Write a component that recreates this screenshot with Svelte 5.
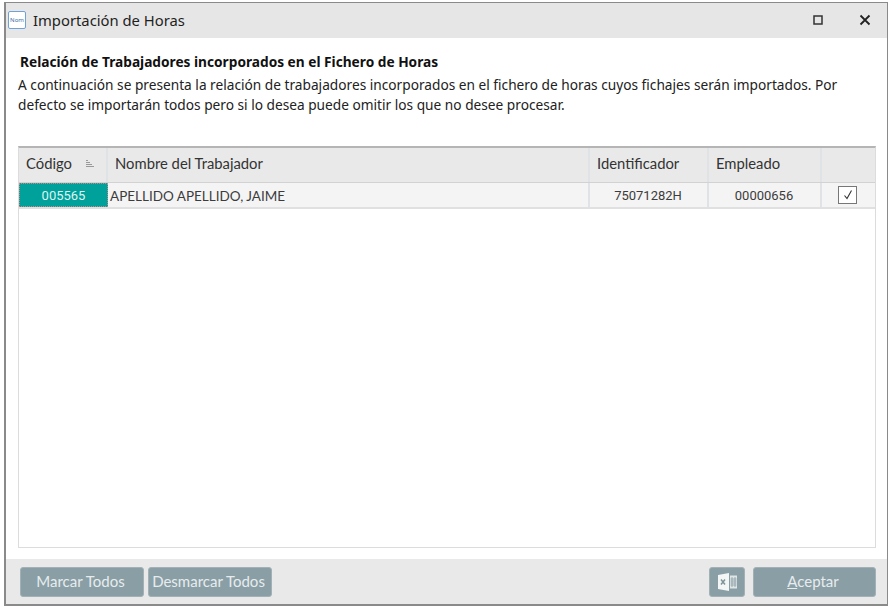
<script lang="ts">
  const columns = ["Nombre del Trabajador", "Identificador", "Empleado", ""];
  const worker = { code: "005565", name: "APELLIDO APELLIDO, JAIME", id: "75071282H", employee: "00000656" };
  let checked = $state(true);
</script>

<div class="window">
  <header class="titlebar">
    <div class="app-icon">Nom</div>
    <span class="title">Importación de Horas</span>
    <div class="controls">
      <svg width="10" height="10" viewBox="0 0 10 10"><rect x="1" y="1" width="8" height="8" fill="none" stroke="#333" stroke-width="1.5" /></svg>
      <svg width="12" height="12" viewBox="0 0 12 12"><path d="M1.5 1.5 10.5 10.5M10.5 1.5 1.5 10.5" stroke="#222" stroke-width="1.8" /></svg>
    </div>
  </header>

  <main class="content">
    <h1>Relación de Trabajadores incorporados en el Fichero de Horas</h1>
    <p>A continuación se presenta la relación de trabajadores incorporados en el fichero de horas cuyos fichajes serán importados. Por defecto se importarán todos pero si lo desea puede omitir los que no desee procesar.</p>

    <div class="grid">
      <div class="row head">
        <div class="cell code-head">
          <span>Código</span>
          <svg width="10" height="9" viewBox="0 0 10 9"><path d="M1 1.5h2M1 3.5h4M1 5.5h6M1 7.5h8" stroke="#999" stroke-width="1" /></svg>
        </div>
        {#each columns as c}
          <div class="cell">{c}</div>
        {/each}
      </div>
      <div class="row data">
        <div class="cell code">{worker.code}</div>
        <div class="cell name">{worker.name}</div>
        <div class="cell center">{worker.id}</div>
        <div class="cell center">{worker.employee}</div>
        <div class="cell check">
          <button type="button" class="checkbox" aria-label="Importar" onclick={() => (checked = !checked)}>
            {#if checked}
              <svg width="12" height="12" viewBox="0 0 12 12"><path d="M2.5 6.5 5 9.5 9.5 1.5" fill="none" stroke="#333" stroke-width="1.1" /></svg>
            {/if}
          </button>
        </div>
      </div>
    </div>
  </main>

  <footer class="footer">
    <button type="button" class="btn mark">Marcar Todos</button>
    <button type="button" class="btn unmark">Desmarcar Todos</button>
    <span class="spacer"></span>
    <button type="button" class="btn excel" aria-label="Excel">
      <svg width="21" height="20" viewBox="0 0 21 20">
        <path d="M1 3 12 1V19L1 17Z" fill="#f4f6f6" />
        <path d="M4 7.5 8 12.5M8 7.5 4 12.5" stroke="#7f9298" stroke-width="1.5" />
        <path d="M13 3.5h7v13h-7z" fill="#dfe5e6" />
        <path d="M15 5v10M18 5v10M13.5 7h6M13.5 9h6M13.5 11h6M13.5 13h6" stroke="#8c9fa5" stroke-width=".8" />
      </svg>
    </button>
    <button type="button" class="btn accept"><u>A</u>ceptar</button>
  </footer>
</div>

<style>
  :global(body) { background: #fff; }
  .window {
    width: 884px; height: 604px; margin: 2px 0 0 4px; box-sizing: border-box;
    display: flex; flex-direction: column;
    border: 1px solid #8a8a8a; border-width: 1px 1px 2px 2px; background: #fff;
    font-family: "Noto Sans", sans-serif; color: #222;
  }
  .titlebar { height: 35px; flex: none; display: flex; align-items: center; background: #e6e6e6; padding: 0 0 2px 2px; box-sizing: border-box; }
  .app-icon {
    width: 16px; height: 16px; border: 1px solid #6fa3d8; border-radius: 2px; background: #fff;
    font-size: 6px; line-height: 16px; text-align: center; color: #3a6ea5; overflow: hidden;
  }
  .title { margin-left: 7px; font-size: 14.8px; color: #1f1f1f; }
  .controls { margin-left: auto; display: flex; align-items: center; gap: 36px; padding-right: 16px; }
  .content { flex: 1; min-height: 0; display: flex; flex-direction: column; padding: 0 11px 11px 12px; }
  h1 { margin: 14px 0 0 2px; font-size: 13.7px; line-height: 20px; font-weight: 700; color: #111; }
  p { margin: 3px 0 0; font-size: 13.7px; line-height: 20px; color: #222; }
  .grid {
    flex: 1; margin-top: 31px; border: 1px solid #dcdcdc; border-top: 2px solid #b5b5b5;
    font-family: Lato, sans-serif;
  }
  .row { display: grid; grid-template-columns: 89px 482px 119px 113px 1fr; }
  .cell { display: flex; align-items: center; box-sizing: border-box; border-right: 2px solid #dfe3e5; }
  .cell:last-child { border-right: none; }
  .head { height: 35px; background: #e9e9e9; border-bottom: 1px solid #d2d2d2; box-sizing: border-box; }
  .head .cell { padding: 0 0 4px 7px; font-size: 14.8px; color: #333; }
  .code-head { gap: 13px; }
  .data { height: 26px; background: #f4f4f4; border-bottom: 2px solid #e0e0e0; box-sizing: border-box; font-size: 13.5px; color: #3c3c3c; }
  .code { justify-content: center; background: #00a19a; color: #dff3f2; border: 1px dotted #c98a8a; font-family: Roboto, sans-serif; font-size: 13px; }
  .name { padding: 2px 0 0 2px; }
  .center { justify-content: center; font-family: Roboto, sans-serif; font-size: 13px; padding-right: 1px; }
  .check { justify-content: center; }
  .checkbox {
    width: 19px; height: 18px; padding: 0; display: flex; align-items: center; justify-content: center;
    background: #fff; border: 1px solid #777; border-radius: 0; margin-right: 2px;
  }
  .footer { height: 45px; flex: none; display: flex; align-items: center; background: #e9e9e9; padding: 0 11px 0 14px; gap: 4px; }
  .spacer { flex: 1; }
  .btn {
    height: 30px; box-sizing: border-box; border: 1px solid #a3b1b6; border-radius: 3px;
    background: #8a9ea5; color: #e6ecee; font-family: Lato, sans-serif; font-size: 15px; padding: 0 3px 2px 0;
  }
  .mark { width: 124px; }
  .unmark { width: 124px; }
  .excel { width: 36px; display: flex; align-items: center; justify-content: center; margin-right: 4px; padding: 0; }
  .accept { width: 123px; }
</style>
